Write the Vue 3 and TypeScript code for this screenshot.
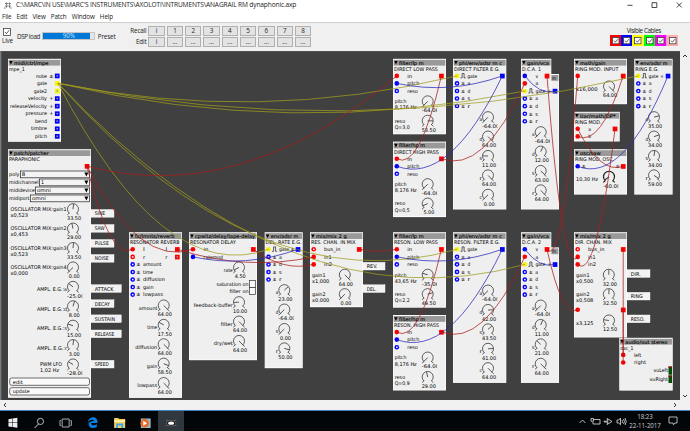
<script setup lang="ts">
type Label = { x: number; y: number; s: string; w: number; end?: boolean }
type Port = { x: number; y: number; c: string; sq?: boolean; open?: boolean }
type Knob = { x: number; y: number; v: number; bip?: boolean; bold?: boolean; s: string }
type Box = { x: number; y: number; w: number; h: number; head: string; hw: number; sub: string; sw: number }
type Cable = { c: string; d: string }

const R = '#f00', B = '#00f', Y = '#f5f500'
const presets = ['i', '1', '2', '3', '4', '5', '6', '7', '8']
const cableColours = ['#f00', '#00f', '#ff0', '#0f0', '#f0f', '#ffafaf']
const menus = ['File', 'Edit', 'View', 'Patch', 'Window', 'Help']

const boxes: Box[] = []
const labels: Label[] = []
const ports: Port[] = []
const knobs: Knob[] = []
const cables: Cable[] = []
const pulses: { x: number; y: number }[] = []

const box = (x: number, y: number, w: number, h: number, head: string, hw: number, sub: string, sw: number) =>
  boxes.push({ x, y, w, h, head, hw, sub, sw })
const text = (x: number, y: number, s: string, w: number, end = false) => labels.push({ x, y, s, w, end })
const port = (x: number, y: number, c: string, sq = false, open = false) => ports.push({ x, y, c, sq, open })
const knob = (x: number, y: number, v: number, bip = false, bold = false) =>
  knobs.push({ x, y, v, bip, bold, s: v.toFixed(2) })
const cable = (c: string, x1: number, y1: number, x2: number, y2: number) => {
  const cy = Math.max(y1, y2) + Math.abs(x1 - x2) * 0.1 + Math.abs(y1 - y2) * 0.1
  cables.push({ c, d: `M${x1} ${y1}Q${(x1 + x2) / 2} ${cy} ${x2} ${y2}` })
}
const angle = (k: Knob) => (k.bip ? (k.v + 64) / 128 : k.v / 64) * 270 - 135

// MIDI input
box(8, 58.3, 53, 83, 'midi/ctrl/mpe', 34.5, 'mpe_1', 16)
const outs: [string, number, string, string][] = [
  ['note', 11, '±', B], ['gate', 10, '', Y], ['gate2', 13.3, '', Y], ['velocity', 19, '+', B],
  ['releaseVelocity', 37, '+', B], ['pressure', 21.5, '+', B], ['bend', 12, '', B], ['timbre', 16, '', B], ['pitch', 12, '', B],
]
outs.forEach(([s, w, m, c], i) => {
  const y = 75.3 + i * 7.55
  text(47, y, s, w, true)
  if (m) text(49.3, y, m, 4.2)
  port(57.2, y, c, true, i !== 1)
})

// Voice patcher
box(8, 148.7, 83, 248.6, 'patch/patcher', 34.7, 'PARAPHONIC', 31)
port(87, 165.7, R, true)
const selects = [
  { s: 'poly', w: 10.5, x: 20.5, v: '8', vw: 3.5, y: 170.2 },
  { s: 'midichannel', w: 29.5, x: 39.6, v: '1', vw: 3, y: 178.2 },
  { s: 'mididevice', w: 26, x: 35.6, v: 'omni', vw: 14, y: 186.2 },
  { s: 'midiport', w: 20.5, x: 30.6, v: 'omni', vw: 14, y: 194.2 },
]
const voice: [string, string, number, boolean][] = [
  ['OSCILLATOR MIX:gain1', 'x0,523', 33.5, false], ['OSCILLATOR MIX:gain2', 'x0,453', 29, false],
  ['OSCILLATOR MIX:gain3', 'x0,523', 33.5, false], ['OSCILLATOR MIX:gain4', 'x0,000', 0, false],
  ['AMPL. E.G.:a', '', -25, true], ['AMPL. E.G.:d', '', 8, true], ['AMPL. E.G.:s', '', 15, false], ['AMPL. E.G.:r', '', 3, true],
]
voice.forEach(([s, sub, v, bip], i) => {
  const y = 208.7 + i * 19.42
  if (sub) {
    text(10.5, y, s, 56, false)
    text(10.5, y + 6, sub, 17.5)
  } else text(67, y + 2.6, s, 30, true)
  knob(73, y, v, bip)
})
text(40, 364, 'PWM LFO', 22)
text(40, 370, '1,02 Hz', 19)
knob(73, 364, -28, true)

const adsrInputs = (x: number, y: number, mod = 8) =>
  ['a', 'd', 's', 'r'].forEach((s, i) => {
    port(x, y + i * 7.55, B, false, true)
    text(x + mod - 4, y + i * 7.55, '±', 4)
    text(x + 10.5, y + i * 7.55, s, 2.8)
  })
const adsrKnobs = (x: number, y: number, vals: number[]) =>
  vals.forEach((v, i) => {
    text(x - 6, y + i * 19.4 + 2.3, 'adsrc'[i], 2.6, true)
    knob(x, y + i * 19.4, v, i !== 2 && i !== 4)
  })

// Reverb
box(129, 231.7, 53, 165.7, 'fx/lmnts/reverb', 39.5, 'RESONATOR REVERB', 49.5)
port(132.7, 248.8, R); port(177.3, 248.8, R, true)
port(132.7, 256.4, R, false, true); port(177.3, 256.4, R, true, true)
text(143, 248.8, 'l', 1.8); text(165.5, 248.8, 'l', 1.8)
text(143, 256.4, 'r', 2.3); text(165.2, 256.4, 'r', 2.3)
const reverb: [string, number, number][] = [['amount', 18.5, 64], ['time', 10, 17.5], ['diffusion', 22, 64], ['gain', 10.5, 58.5], ['lowpass', 20, 64]]
reverb.forEach(([s, w, v], i) => {
  const y = 263.9 + i * 7.55
  port(132.7, y, B, false, true)
  text(136.3, y, '±', 4.3)
  text(143, y, s, w)
  text(157.3, 307.4 + i * 19.4, s, w, true)
  knob(163.7, 305 + i * 19.4, v)
})

// Delay
box(189, 231.7, 68, 128, 'cpwitz/delay/tape-delay', 60, 'RESONATOR DELAY', 46)
port(193, 248.8, R); port(253.3, 248.8, R, true); port(193, 256.4, B)
text(203.5, 248.8, 'in', 4.8); text(203.5, 256.4, 'ratemod', 19.5)
const delay: [string, number, number, number][] = [['rate', 9, 267, 4.5], ['feedback-buffer', 39, 301.7, 10], ['filter', 12, 321.1, 64], ['dry/wet', 19, 340.5, 64]]
delay.forEach(([s, w, y, v]) => { text(232.8, y + 2.5, s, w, true); knob(239, y, v) })
text(248.5, 283.3, 'saturation on', 32, true)
text(248.5, 290.8, 'filter on', 19, true)

// Delay rate envelope
box(264.7, 231.7, 38, 136, 'env/adsr m', 27.5, 'DEL. RATE E.G.', 36)
port(268.5, 248.8, Y); port(298, 248.8, B, true)
pulses.push({ x: 272, y: 248.8 })
text(279, 248.8, 'gate', 10); text(290.5, 248.8, '±', 4)
adsrInputs(268.5, 256.4)
adsrKnobs(284.3, 289.7, [23, -64, 0, 50])

// Channel mixers
const mixer = (x: number, head: string, w: number, h: number, g: [string, number][]) => {
  box(x, 231.7, 53, h, 'mix/mix 2 g', 30.7, head, w)
  port(x + 3.7, 248.8, R, false, true); port(x + 3.7, 256.4, R); port(x + 3.7, 263.9, R)
  port(x + 49.2, 248.8, R, true)
  text(x + 14, 248.8, 'bus_in', 16.5); text(x + 14, 256.4, 'in1', 7.5); text(x + 14, 263.9, 'in2', 8)
  g.forEach(([s, v], i) => {
    const y = 274.3 + i * 19.4
    text(x + 2, y + 0.4, 'gain' + (i + 1), 13.5)
    text(x + 2, y + 6.4, s, 17.3)
    knob(x + 34.8, y, v)
  })
}
mixer(310, 'RES. CHAN. IN MIX', 44.7, 75, [['x1,000', 64], ['x0,000', 0]])
mixer(574, 'DIR. CHAN. MIX', 37, 105.3, [['x0,500', 32], ['x0,508', 32.5]])
port(577.7, 309.3, R); port(623.2, 309.3, R, true)
text(576, 322.5, 'x3,125', 17.5)
knob(609, 320, 12.5)

// Filters, filter envelopes and amplifiers, one chain per row
const chain = (oy: number, tag: string, n: string, f: [string, number, string, number, string, number, string, number], eg: number[], amp: number[]) => {
  const lp = (y: number, kind: string, title: string, tw: number, a: [string, number, string, number]) => {
    box(393, y, 53, 75.5, `filter/${kind} m`, kind === 'lp' ? 24.6 : 26, title, tw)
    port(396.8, y + 17.1, R); port(396.8, y + 24.6, B); port(396.8, y + 32.2, B, false, true); port(441.4, y + 17.1, R, true)
    text(407.3, y + 17.1, 'in', 4.8); text(407.3, y + 24.6, 'pitch', 12); text(407.3, y + 32.2, 'reso', 10.5)
    text(394.7, y + 42.6, 'pitch', 11.7); text(394.7, y + 48.8, a[0], 22)
    text(394.7, y + 62, 'reso', 10.5); text(394.7, y + 68.2, a[2], 15)
    knob(427.7, y + 42.6, a[1], true); knob(427.7, y + 62, a[3])
  }
  lp(oy, 'lp', `${tag} LOW PASS`, 44, [f[0], f[1], f[2], f[3]])
  lp(oy + 82.8, 'hp', `${tag} HIGH PASS`, 45, [f[4], f[5], f[6], f[7]])
  box(453, oy, 53.3, 150.7, 'phi/env/adsr m c', 43, `${tag} FILTER E.G.`, 46)
  port(457, oy + 17.1, Y); port(502.3, oy + 17.1, B, true)
  pulses.push({ x: 460.5, y: oy + 17.1 })
  text(467.3, oy + 17.1, 'gate', 10)
  adsrInputs(457, oy + 24.6)
  adsrKnobs(488, oy + 58.4, eg)
  box(521, oy + 15.2, 38, 135.5, '', 0, '', 0)
  text(552, oy + 19, 'm', 3.7)
  box(521, oy, 30.3, 30, 'gain/vca', 22, `D.C.A. ${n}`, 19)
  port(524.8, oy + 17.1, B); port(524.8, oy + 24.6, R); port(547, oy + 17.1, R, true)
  port(524.8, oy + 32.2, Y); port(555, oy + 32.2, B, true)
  pulses.push({ x: 528.3, y: oy + 32.2 })
  text(535.5, oy + 17.1, 'v', 2.6); text(535.5, oy + 24.6, 'a', 2.8)
  text(535.5, oy + 32.2, 'gate', 10); text(547.2, oy + 32.2, '+', 4)
  adsrInputs(524.8, oy + 39.8)
  adsrKnobs(540.7, oy + 73.4, amp)
}
chain(58.3, 'DIRECT', '1', ['8,176 Hz', -64, 'Q=3,0', 53.5, '8,176 Hz', -64, 'Q=0,5', 5], [-64, 64, 11, 64, 0], [-64, 12, 63, 64])
chain(231.7, 'RESON.', '2', ['43,65 Hz', -35, 'Q=2,2', 49.5, '8,176 Hz', -64, 'Q=0,9', 29], [-64, 42, 43.5, 41, 64], [-64, 11, 21, 64])

// Ring modulator
box(574, 58.3, 53, 45.4, 'math/gain', 25.5, 'RING MOD. INPUT', 43.5)
port(577.7, 75.4, R); port(623.2, 75.4, R, true)
text(576, 88.5, 'x16,000', 21.5); knob(609, 86, 64)
box(574, 111.3, 45.7, 29.7, 'tiar/math/DP*', 35.5, 'RING MOD.', 26.7)
port(577.7, 128.3, R); port(577.7, 135.9, R); port(615, 128.3, R, true)
text(588.3, 128.3, 'a', 2.8); text(588.3, 135.9, 'b', 2.8)
box(574, 148.7, 53, 45.4, 'osc/saw', 20.7, 'RING MOD. OSC.', 39)
port(577.7, 165.8, B); port(623.2, 165.8, R, true)
text(581.5, 165.4, '±', 4.3); text(615.5, 165.4, '±', 4.3)
text(576, 179, '10,30 Hz', 22); knob(609, 176.3, -60, true, true)
box(634.3, 58.3, 38.3, 135.8, 'env/adsr m', 27, 'RING E.G.', 23.5)
port(638.3, 75.4, Y); port(668, 75.4, B, true)
pulses.push({ x: 641.8, y: 75.4 })
text(648.5, 75.4, 'gate', 10); text(660, 75.4, '+', 4)
adsrInputs(638.3, 83)
adsrKnobs(654, 116.7, [35, 34, 34, 59])

// Output
box(619.3, 337.3, 53.4, 52.8, 'audio/out stereo', 42, 'dac_1', 13.3)
port(623.2, 354.4, R); port(623.2, 362, R)
text(634, 354.4, 'left', 7.3); text(634, 362, 'right', 12)
text(668, 370, 'vuLeft', 14.5, true); text(668, 378.7, 'vuRight', 18.5, true)

const notes: [number, number, number, string, number][] = [
  [91, 209, 23, 'SINE', 10.5], [91, 224, 23, 'SAW', 10], [91, 239, 23, 'PULSE', 14], [91, 254, 23, 'NOISE', 14],
  [91, 284.2, 30.3, 'ATTACK', 19], [91, 299.3, 23, 'DECAY', 15], [91, 314.4, 30.3, 'SUSTAIN', 20.3], [91, 329.5, 30.3, 'RELEASE', 19.7],
  [91, 359.8, 23, 'SPEED', 14], [363, 261.8, 22, 'REV.', 10.7], [363, 284.3, 22, 'DEL.', 10],
  [627, 269.2, 23, 'DIR.', 10], [627, 291.8, 23, 'RING', 12], [627, 314.5, 23, 'RESO.', 14],
]

const cr = '#a81c1c', cb = '#2828b8', cy = '#a09c1c'
for (const [x, y] of [[457, 75.4], [525, 90.5], [638.3, 75.4], [457, 248.8], [525, 263.9], [268.5, 248.8]]) cable(cy, 58, 82.8, x, y)
for (const [x, y] of [[132.7, 248.8], [193, 248.8], [396.8, 75.4]]) cable(cr, 87, 165.7, x, y)
cable(cr, 177.3, 248.8, 313.7, 256.4)
cable(cr, 253.3, 248.8, 313.7, 263.9)
cable(cb, 298, 248.8, 193, 256.4)
cable(cr, 359.2, 248.8, 396.8, 248.8)
for (const y of [75.4, 248.8]) {
  cable(cr, 441.4, y, 396.8, y + 82.8)
  cable(cb, 502.3, y, 396.8, y + 7.5)
  cable(cb, 502.3, y, 396.8, y + 90.3)
  cable(cr, 441.4, y + 82.8, 524.8, y + 7.5)
  cable(cb, 555, y + 15.1, 524.8, y)
}
cable(cr, 547, 75.4, 577.7, 256.4)
cable(cr, 547, 248.8, 577.7, 75.4)
cable(cr, 547, 248.8, 577.7, 309.3)
cable(cr, 623.2, 75.4, 577.7, 135.9)
cable(cr, 623.2, 165.8, 577.7, 128.3)
cable(cr, 615, 128.3, 577.7, 263.9)
cable(cb, 668, 75.4, 577.7, 165.8)
cable(cr, 623.2, 248.8, 623.2, 354.4)
cable(cr, 623.2, 309.3, 623.2, 362)
</script>

<template>
  <div class="window">
    <header class="title">
      <svg class="logo" viewBox="0 0 8 7"><path d="M1 1.5H7M1 4H7M0 6H2M6 6H8M2.5 .5V6M5.5 .5V6" stroke="#555" stroke-width=".8" stroke-dasharray="1.3 .4" /></svg>
      <span class="path">C:\MARC\IN USE\MARC'S INSTRUMENTS\AXOLOTI\INTRUMENTS\ANAGRAIL RM dynaphonic.axp</span>
      <svg class="controls" viewBox="0 0 56 8">
        <path d="M.5 4.3H5.5M25 1.7H29.8V6.5H25ZM49.8 1.5L54.8 6.5M54.8 1.5L49.8 6.5" fill="none" stroke="#333" stroke-width=".9" />
      </svg>
    </header>
    <nav class="menu"><span v-for="m in menus" :key="m">{{ m }}</span></nav>
    <section class="toolbar">
      <div class="live">
        <svg class="check" viewBox="0 0 8 8"><rect x=".5" y=".5" width="7" height="7" fill="#fff" stroke="#444" stroke-width=".8" /><path d="M2 4L3.4 5.6L6.2 2.2" fill="none" stroke="#333" stroke-width=".8" /></svg>
        <span>Live</span>
      </div>
      <span class="dsp">DSP load</span>
      <div class="meter"><div class="fill"></div><span>90%</span></div>
      <span class="preset">Preset</span>
      <div class="presets">
        <span class="lab">Recall</span><button v-for="p in presets" :key="p">{{ p }}</button>
        <span class="lab">Edit</span><button v-for="p in presets" :key="'e' + p">{{ p === 'i' ? 'i' : '...' }}</button>
      </div>
      <div class="visible">
        <span>Visible Cables</span>
        <div class="swatches">
          <svg v-for="c in cableColours" :key="c" viewBox="0 0 11.4 11.4">
            <rect width="11.4" height="11.4" :fill="c" />
            <rect x="2.6" y="2.6" width="6.4" height="6.2" fill="#fff" stroke="#444" stroke-width=".8" />
            <path d="M4 5.6L5.4 7.2L7.9 4.2" fill="none" stroke="#333" stroke-width=".8" />
          </svg>
        </div>
      </div>
    </section>
    <main class="work">
      <svg class="patch" viewBox="0 50.5 680 349">
        <rect y="50" width="1.3" height="350" fill="#777f84" />
        <rect y="50" width="680" height="1" fill="#5c6366" />
        <g v-for="(b, i) in boxes" :key="i">
          <rect :x="b.x" :y="b.y" :width="b.w" :height="b.h" fill="#fff" />
          <rect :x="b.x + .5" :y="b.y + 1" :width="b.w - 1" :height="b.h - 1.7" fill="#efefef" />
          <rect :x="b.x + .7" :y="b.y + 1" :width="b.w - 1.4" height="5.8" fill="#999" />
          <template v-if="b.head">
            <path :d="`M${b.x + 1.2} ${b.y + 2.2}h3.4l-1.7 3.6z`" fill="#000" />
            <text class="head" :x="b.x + 6" :y="b.y + 5.8" :textLength="b.hw" lengthAdjust="spacingAndGlyphs">{{ b.head }}</text>
            <text :x="b.x + .9" :y="b.y + 11.9" :textLength="b.sw" lengthAdjust="spacingAndGlyphs">{{ b.sub }}</text>
          </template>
        </g>
        <g v-for="n in notes" :key="n[3]">
          <rect :x="n[0]" :y="n[1]" :width="n[2]" height="7.7" fill="#f2f2f2" stroke="#fff" stroke-width=".4" />
          <text :x="n[0] + 3.7" :y="n[1] + 5.8" :textLength="n[4]" lengthAdjust="spacingAndGlyphs">{{ n[3] }}</text>
        </g>
        <g v-for="s in selects" :key="s.s">
          <text x="9" :y="s.y + 5.3" :textLength="s.w" lengthAdjust="spacingAndGlyphs">{{ s.s }}</text>
          <rect :x="s.x" :y="s.y + .3" :width="89.6 - s.x" height="6.8" fill="#f4f4f4" stroke="#222" stroke-width=".7" />
          <text :x="s.x + 1.3" :y="s.y + 5.5" :textLength="s.vw" lengthAdjust="spacingAndGlyphs">{{ s.v }}</text>
          <path :d="`M84.4 ${s.y + 1.7}h4l-2 4z`" />
        </g>
        <g fill="#fafafa" stroke="#333" stroke-width=".7">
          <rect x="9.7" y="377.5" width="79.8" height="7.3" rx="2" />
          <rect x="9.7" y="387.2" width="79.8" height="7.3" rx="2" />
          <rect x="249.4" y="279.9" width="6" height="7" />
          <rect x="249.4" y="287" width="6" height="7" />
        </g>
        <text x="12.7" y="383.1" textLength="10" lengthAdjust="spacingAndGlyphs">edit</text>
        <text x="12.7" y="392.8" textLength="17" lengthAdjust="spacingAndGlyphs">update</text>
        <path d="M668.5 366H672V374.2H668.5ZM668.5 375H672V382.5H668.5Z" fill="#064d06" />
        <path d="M668.5 366H672V367.4H668.5ZM668.5 375H672V376.4H668.5Z" fill="#801414" />
        <g v-for="(k, i) in knobs" :key="'k' + i" :transform="`translate(${k.x} ${k.y})`">
          <path d="M-3.6 4.1A5.5 5.5 0 1 1 3.6 4.1M-3.6 3.7L-5.7 5.6M3.6 3.7L5.7 5.6" fill="none" stroke="#222" :stroke-width="k.bold ? 1.2 : .7" />
          <path d="M0 0V-5.2" stroke="#222" :stroke-width="k.bold ? 1 : .7" :transform="`rotate(${angle(k)})`" />
          <svg x="-6.2" y="5.5" width="15.6" height="7">
            <text :x="k.s.length === 4 ? 1.9 : .2" y="5.3" :textLength="k.s.length === 6 ? 17.5 : k.s.length === 5 ? 14.2 : 11" lengthAdjust="spacingAndGlyphs">{{ k.s }}</text>
          </svg>
        </g>
        <text v-for="(l, i) in labels" :key="'l' + i" :x="l.end ? l.x - l.w : l.x" :y="l.y + 1.8" :textLength="l.w" lengthAdjust="spacingAndGlyphs">{{ l.s }}</text>
        <path v-for="(p, i) in pulses" :key="'p' + i" :d="`M${p.x} ${p.y + 2}h1.6v-4.4h2v4.4h1.6`" fill="none" stroke="#222" stroke-width=".7" />
        <g v-for="(p, i) in ports" :key="'o' + i" :fill="p.c">
          <rect v-if="p.sq" :x="p.x - 2.3" :y="p.y - 2.2" width="4.7" height="4.7" />
          <circle v-else :cx="p.x" :cy="p.y" r="2.3" />
          <rect v-if="p.open" :x="p.x - .7" :y="p.y - .7" width="1.5" height="1.5" :fill="p.sq ? '#99a' : '#fff'" />
        </g>
        <g fill="none" stroke-width=".75">
          <path v-for="(c, i) in cables" :key="'c' + i" :d="c.d" :stroke="c.c" />
        </g>
      </svg>
      <div class="vbar">
        <svg viewBox="0 0 6 4"><path d="M1 3L3 1L5 3" /></svg>
        <svg viewBox="0 0 6 4"><path d="M1 1L3 3L5 1" /></svg>
      </div>
    </main>
    <div class="hbar">
      <svg viewBox="0 0 4 6"><path d="M3 1L1 3L3 5" /></svg>
      <svg viewBox="0 0 4 6"><path d="M1 1L3 3L1 5" /></svg>
    </div>
    <footer class="taskbar">
      <div class="apps">
        <svg viewBox="0 0 26 21"><path d="M8.3 8.2L12 7.6V11.6H8.3ZM12.5 7.5L17.2 6.8V11.6H12.5ZM8.3 12.1H12V16L8.3 15.5ZM12.5 12.1H17.2V16.8L12.5 16.1Z" fill="#eee" /></svg>
        <svg viewBox="0 0 26 21"><path d="M12.3 13L8.5 17" stroke="#ccc" /><circle cx="14.3" cy="10.4" r="3.1" fill="none" stroke="#ccc" stroke-width=".9" /></svg>
        <svg viewBox="0 0 26 21"><path d="M9 8H16V16H9ZM7.8 9.5H6.8V14.5H7.8M17.2 9.5H18.2V14.5H17.2" fill="none" stroke="#bbb" stroke-width=".9" /></svg>
        <svg viewBox="0 0 26 21"><path d="M9.5 12H18.4C19 4.8 10 4.5 8.8 11C12 7.5 14.8 8.6 14.8 10.2H12.2M9.6 11.4C8.7 17.5 14 18 17.7 16V13.3C14.5 15.2 12 14.3 12 12" fill="#087fe2" /></svg>
        <svg viewBox="0 0 26 21"><path d="M9 7H13L14 8H20V17H9Z" fill="#f5cf62" /><path d="M9 9.2H20V11H9Z" fill="#fff0a9" /><path d="M11 17V12.5H18V17H16.2V14.5H12.8V17Z" fill="#36a8e4" /></svg>
        <svg viewBox="0 0 26 21"><path d="M9.7 7.5H19.5V17H9.7Z" fill="#94bdd1" /><circle cx="13.6" cy="12.2" r="4.3" fill="#ed6a20" /><path d="M12.1 9.7V14.7L16 12.2Z" fill="#fff" /></svg>
        <svg class="active" viewBox="0 0 26 21"><path d="M8 9L11 10M18 9L15 10M7.5 14.7L11 14M18.5 14.7L15 14M8 12H18" stroke="#777" stroke-width=".7" /><ellipse cx="13" cy="12.2" rx="4.6" ry="2.7" fill="#111" stroke="#888" stroke-width=".5" /><ellipse cx="13" cy="12.2" rx="3" ry="1.6" fill="#fff" /></svg>
      </div>
      <div class="tray">
        <svg class="icons" viewBox="0 0 50 12" fill="none" stroke="#ccc" stroke-width=".9">
          <path d="M1.5 8L4.5 5L7.5 8M16 4.5H22V9H15V7M13 3.5H15.5V6.2H13ZM26 6.2H30L29 3.5L34 6.5L29 9.5L30 7H26ZM39 5H40.7L42.5 3V9.7L40.7 8H39ZM44 5Q45.3 6.5 44 8M45.5 4Q47.5 6.5 45.5 9M47 3Q49.5 6.5 47 10" />
        </svg>
        <div class="clock"><span>18:23</span><span>22-11-2017</span></div>
        <svg class="chat" viewBox="0 0 10 10"><path d="M1 1H9V7H6.7L5.5 8.8L5 7H1Z" fill="none" stroke="#ddd" stroke-width=".8" /></svg>
      </div>
    </footer>
  </div>
</template>

<style>
body { background: #fff; }
</style>

<style scoped>
.window { width: 690px; height: 431px; display: flex; flex-direction: column; overflow: hidden; background: #fff; font-family: "Open Sans", "Noto Sans", sans-serif; font-size: 6.3px; color: #222; }
.title { height: 10px; display: flex; align-items: center; padding: 0 7.5px 0 4px; flex: none; }
.logo { width: 8px; height: 7px; margin-right: 4px; }
.path { font-size: 6.6px; line-height: 8px; white-space: nowrap; letter-spacing: -.14px; }
.controls { width: 56px; height: 8px; margin-left: auto; }
.menu { height: 12.5px; flex: none; box-sizing: border-box; display: flex; align-items: center; gap: 5.1px; padding: 2px 0 0 2px; border-bottom: 1px solid #d0d0d0; line-height: 8px; letter-spacing: -.12px; }
.toolbar { height: 28px; flex: none; background: #f0f0f0; display: flex; align-items: flex-start; line-height: 8px; letter-spacing: -.15px; }
.live { width: 15px; padding: 5.5px 0 0 2px; display: flex; flex-direction: column; gap: 1px; }
.check { width: 8px; height: 8px; margin-left: 1px; }
.dsp { width: 25.3px; padding-top: 10px; white-space: nowrap; letter-spacing: -.4px; }
.meter { width: 51px; height: 6px; border: 1px solid #c4c4c4; background: #e6e6e6; margin-top: 9.5px; position: relative; text-align: center; }
.fill { width: 46.5px; height: 6px; background: #0078d7; }
.meter span { position: absolute; inset: -1px 0 0 0; color: #cfe6f8; }
.preset { padding: 10px 0 0 2.5px; width: 28.7px; }
.presets { display: grid; grid-template-columns: 20px repeat(9, 16.3px); column-gap: 2px; row-gap: 1.2px; padding-top: 3.8px; line-height: 9.5px; }
.lab { text-align: right; }
.presets button { height: 9.6px; padding: 0; margin: 0; border: 1px solid #b0b0b0; background: #e3e3e3; font: 6.3px/6px "Open Sans", sans-serif; color: #222; }
.visible { margin-left: auto; margin-right: 12px; padding-top: 4.3px; display: flex; flex-direction: column; align-items: center; white-space: nowrap; letter-spacing: -.42px; }
.swatches { display: flex; }
.swatches svg { width: 11.4px; height: 11.4px; }
.work { height: 349px; flex: none; display: flex; background: #404040; }
.patch { width: 680px; height: 349px; display: block; background: #404040; }
.patch text { font: 5.1px "DejaVu Sans", sans-serif; fill: #000; }
.patch text.head { stroke: #000; stroke-width: .12px; }
.vbar { width: 10px; background: #f0f0f0; display: flex; flex-direction: column; justify-content: space-between; align-items: center; padding: 3px 0 2px; box-sizing: border-box; }
.vbar svg { width: 6px; height: 4px; }
.vbar path, .hbar path { fill: none; stroke: #333; stroke-width: 1; }
.hbar { height: 10px; flex: none; background: #f0f0f0; display: flex; justify-content: space-between; align-items: center; padding: 0 13px 0 3px; }
.hbar svg { width: 4px; height: 6px; }
.taskbar { flex: 1; background: #030609; border-top: 1px solid #3f83c4; display: flex; justify-content: space-between; color: #ccc; }
.apps { display: flex; }
.apps svg { width: 26.3px; height: 21px; display: block; }
.apps .active { background: #30373d; box-shadow: inset 0 -1px #76b9ed; }
.tray { display: flex; align-items: center; }
.icons { width: 50px; height: 12px; }
.clock { width: 34px; display: flex; flex-direction: column; align-items: center; line-height: 9px; font-size: 6.2px; letter-spacing: -.1px; white-space: nowrap; }
.chat { width: 10px; height: 10px; margin: 0 12px 0 6px; }
</style>
